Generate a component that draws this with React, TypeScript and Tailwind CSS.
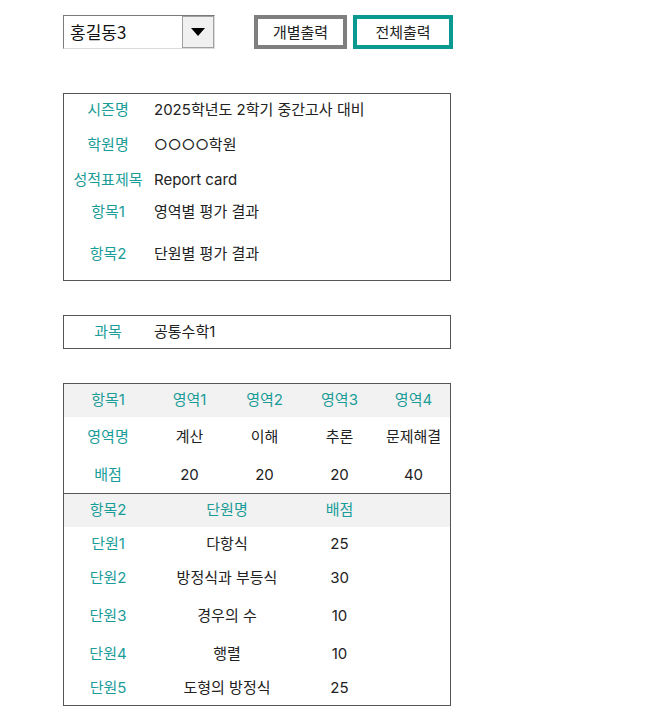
const label = "text-[#1a9c98]";
const font = { fontFamily: 'Inter, "Noto Sans CJK KR", sans-serif' };
const cjk = { fontFamily: '"Noto Sans CJK KR", sans-serif' };

function InfoRow({ name, value, h }: { name: string; value: string; h: string }) {
  return (
    <div className={`flex items-center ${h}`}>
      <div className={`w-[88px] text-center ${label}`}>{name}</div>
      <div className="pl-[2px] text-[#222]">{value}</div>
    </div>
  );
}

const units = [
  { n: "단원1", name: "다항식", s: "25", h: "h-[34px]" },
  { n: "단원2", name: "방정식과 부등식", s: "30", h: "h-[34px]" },
  { n: "단원3", name: "경우의 수", s: "10", h: "h-[42px]" },
  { n: "단원4", name: "행렬", s: "10", h: "h-[34px]" },
  { n: "단원5", name: "도형의 방정식", s: "25", h: "h-[34px]" },
];

export default function App() {
  return (
    <div className="w-[670px] h-[716px] bg-white text-[15px] overflow-hidden" style={font}>
      <div className="pl-[63px] pt-[15px]">
        {/* top controls */}
        <div className="flex items-center">
          <div className="flex h-[34px] w-[152px] border border-t-[#7a7a7a] border-l-[#7a7a7a] border-r-[#dcdcdc] border-b-[#dcdcdc] bg-white">
            <div className="flex-1 flex items-center pl-[6px] text-[17px] text-[#111]" style={cjk}>
              홍길동3
            </div>
            <div className="w-[32px] bg-[#f0f0f0] border border-[#a0a0a0] flex items-center justify-center">
              <svg width="14" height="8" viewBox="0 0 14 8">
                <polygon points="0,0 14,0 7,8" fill="#000" />
              </svg>
            </div>
          </div>
          <button
            className="ml-[39px] h-[34px] w-[93px] border-4 border-[#7f7f7f] bg-white text-[15px] text-[#222] flex items-center justify-center"
            style={cjk}
          >
            개별출력
          </button>
          <button
            className="ml-[6px] h-[34px] w-[100px] border-4 border-[#0a9990] bg-white text-[15px] text-[#222] flex items-center justify-center"
            style={cjk}
          >
            전체출력
          </button>
        </div>

        {/* info box */}
        <div className="mt-[44px] w-[388px] border border-[#555]">
          <InfoRow name="시즌명" value="2025학년도 2학기 중간고사 대비" h="h-[32px]" />
          <InfoRow name="학원명" value="○○○○학원" h="h-[38px]" />
          <InfoRow name="성적표제목" value="Report card" h="h-[32px]" />
          <InfoRow name="항목1" value="영역별 평가 결과" h="h-[32px]" />
          <InfoRow name="항목2" value="단원별 평가 결과" h="h-[52px]" />
        </div>

        {/* subject */}
        <div className="mt-[34px] w-[388px] border border-[#555]">
          <InfoRow name="과목" value="공통수학1" h="h-[32px]" />
        </div>

        {/* table */}
        <div className="mt-[34px] w-[388px] border border-[#555]">
          <div className="grid grid-cols-[88px_75px_75px_75px_73px] h-[33px] items-center bg-[#f2f2f2] text-center">
            <div className={label}>항목1</div>
            <div className={label}>영역1</div>
            <div className={label}>영역2</div>
            <div className={label}>영역3</div>
            <div className={label}>영역4</div>
          </div>
          <div className="grid grid-cols-[88px_75px_75px_75px_73px] h-[40px] items-center text-center text-[#222]">
            <div className={label}>영역명</div>
            <div>계산</div>
            <div>이해</div>
            <div>추론</div>
            <div>문제해결</div>
          </div>
          <div className="grid grid-cols-[88px_75px_75px_75px_73px] h-[36px] items-center text-center text-[#222]">
            <div className={label}>배점</div>
            <div>20</div>
            <div>20</div>
            <div>20</div>
            <div>40</div>
          </div>
          <div className="border-t border-[#555]">
            <div className="grid grid-cols-[88px_150px_75px_73px] h-[33px] items-center bg-[#f2f2f2] text-center">
              <div className={label}>항목2</div>
              <div className={label}>단원명</div>
              <div className={label}>배점</div>
              <div />
            </div>
            {units.map((u) => (
              <div
                key={u.n}
                className={`grid grid-cols-[88px_150px_75px_73px] ${u.h} items-center text-center text-[#222]`}
              >
                <div className={label}>{u.n}</div>
                <div>{u.name}</div>
                <div>{u.s}</div>
                <div />
              </div>
            ))}
          </div>
        </div>
      </div>
    </div>
  );
}
